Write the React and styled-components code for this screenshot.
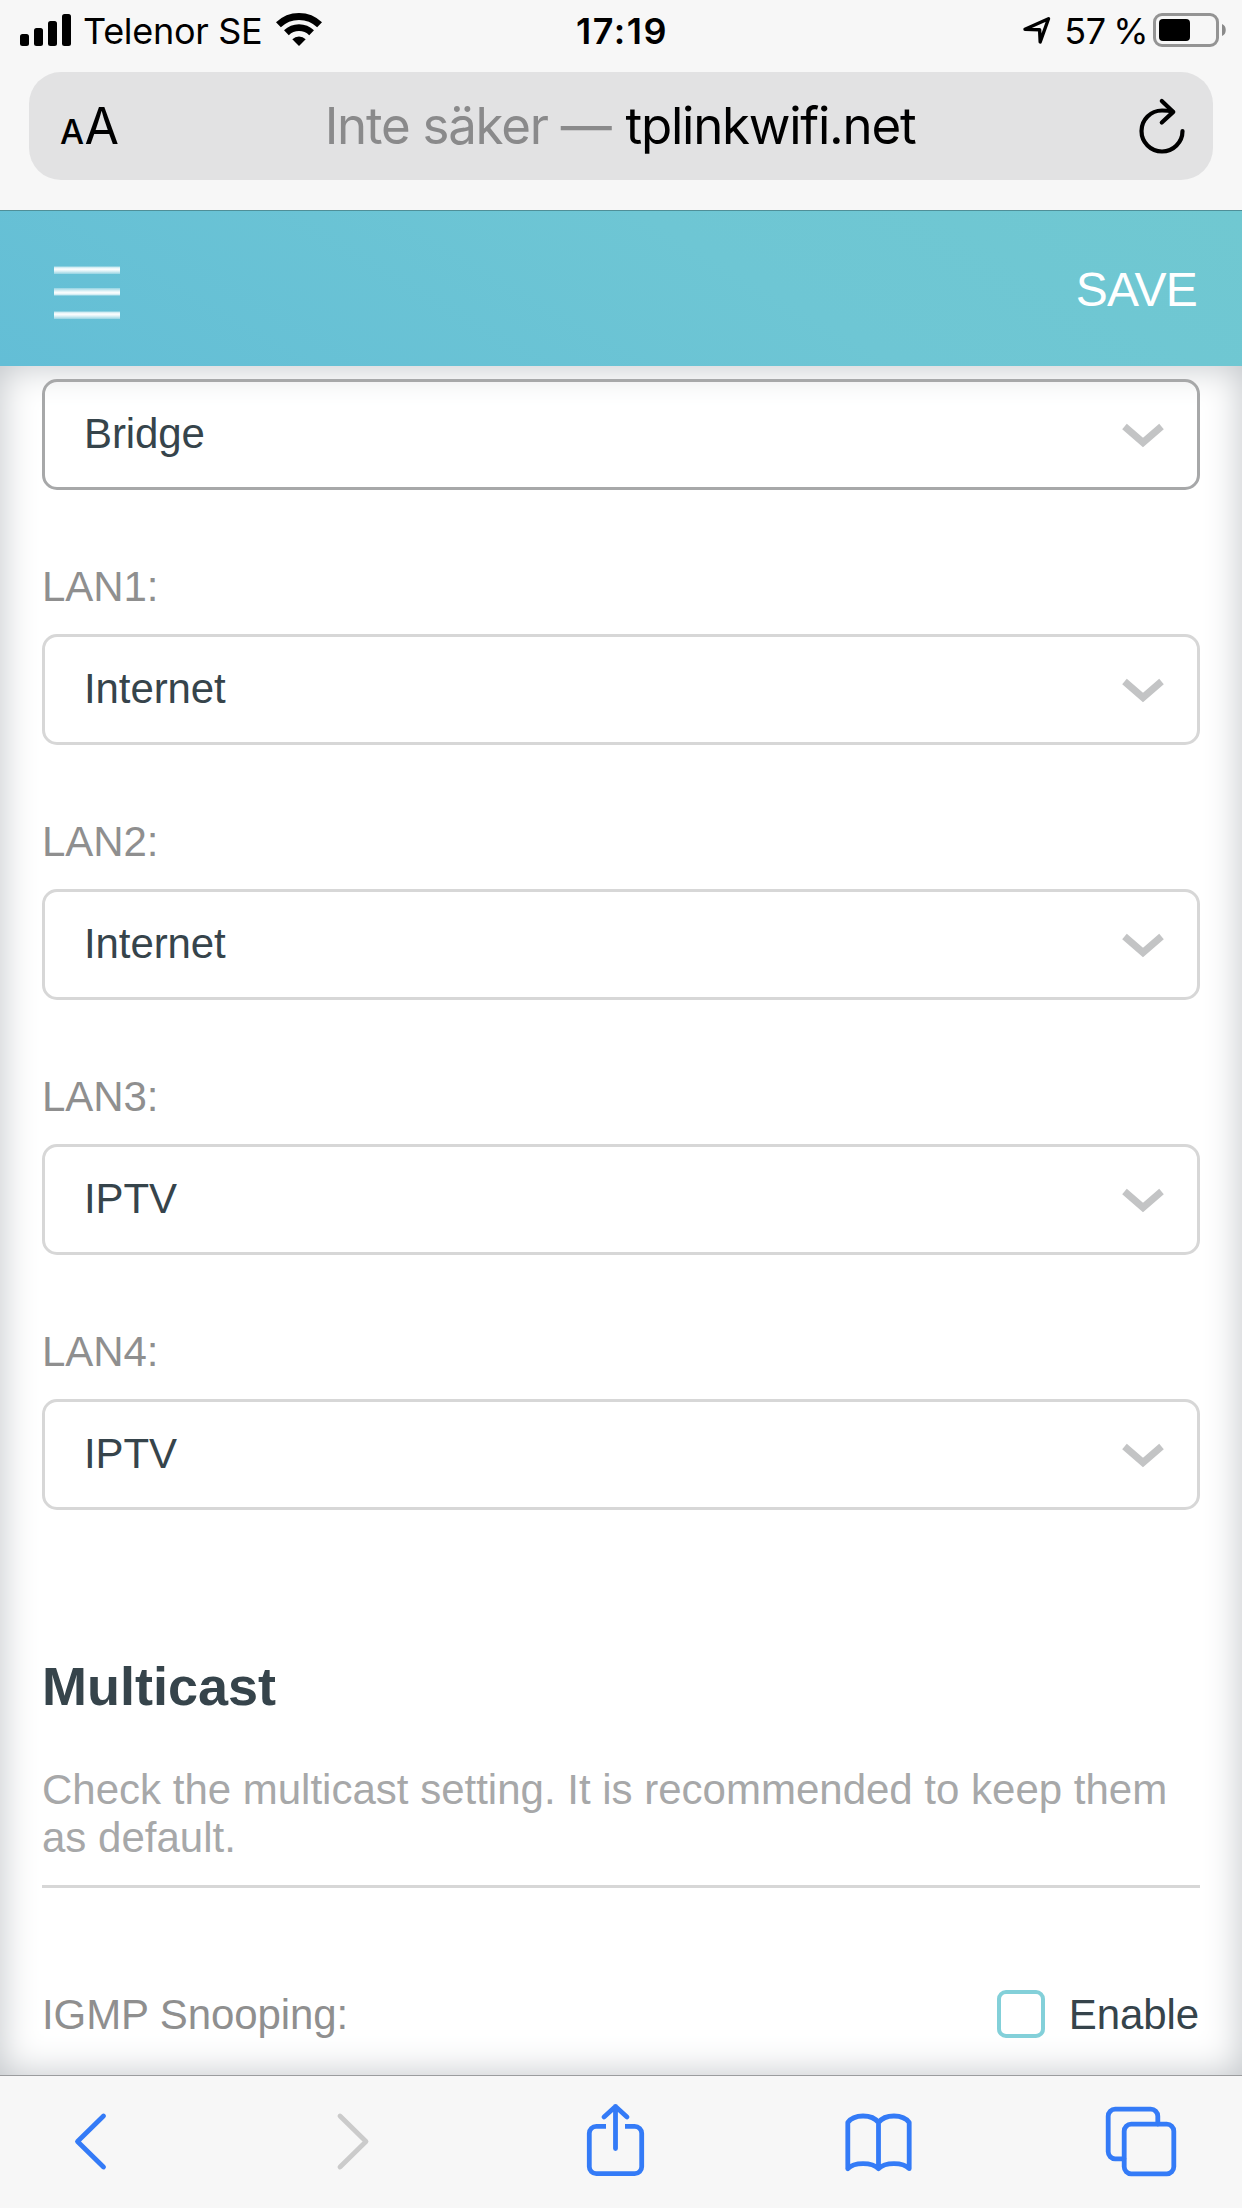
import React, { useState } from "react";
import styled, { createGlobalStyle } from "styled-components";

const GlobalStyle = createGlobalStyle`
  * { box-sizing: border-box; }
  body { margin: 0; background: #f7f7f7; }
`;

const Screen = styled.div`
  display: flex;
  flex-direction: column;
  width: 1242px;
  height: 2208px;
  overflow: hidden;
  font-family: "Liberation Sans", Arial, sans-serif;
  font-size: 42px;
  line-height: 48px;
`;

const BrowserTop = styled.div`
  height: 211px;
  background: #f7f7f7;
  border-bottom: 1px solid #4f8f98;
  font-family: Inter, sans-serif;
  color: #000;
`;

const StatusBar = styled.div`
  display: grid;
  grid-template-columns: 1fr auto 1fr;
  height: 62px;
  padding: 0 16px 0 20px;
  font-size: 36px;
  line-height: 62px;
`;

const StatusGroup = styled.div`
  display: flex;
  justify-content: ${(props) => props.$align || "flex-start"};
`;

const Carrier = styled.span`
  width: 193px;
  margin-left: 11px;
  letter-spacing: -0.3px;
  white-space: nowrap;
`;

const Clock = styled.span`
  padding-right: 2px;
  font-weight: 600;
  letter-spacing: 1.5px;
`;

const Percent = styled.span`
  margin: 0 5px 0 12px;
  letter-spacing: -0.5px;
  word-spacing: -2px;
  white-space: nowrap;
`;

const AddressBar = styled.div`
  display: grid;
  grid-template-columns: 100px 1fr 100px;
  height: 108px;
  margin: 10px 29px 0;
  border-radius: 32px;
  background: #e2e2e3;
  line-height: 108px;
`;

const TextSize = styled.div`
  padding-left: 31px;
  font-size: 50px;
  letter-spacing: -0.5px;
  white-space: nowrap;
  small {
    margin-right: 1px;
    font-size: 34px;
    font-weight: 500;
  }
`;

const Url = styled.div`
  padding-right: 2px;
  font-size: 51px;
  letter-spacing: -1.25px;
  text-align: center;
  white-space: nowrap;
`;

const Muted = styled.span`
  margin-right: 2px;
  color: #8a8a8b;
`;

const Header = styled.header`
  display: flex;
  align-items: center;
  justify-content: space-between;
  height: 155px;
  padding: 0 45px 0 54px;
  background: linear-gradient(30deg, #63bed6 0%, #6ec6d4 60%, #70c8d1 100%);
`;

const Save = styled.button`
  padding: 2px 0 0;
  border: 0;
  background: none;
  color: #fff;
  font: 48px/56px "Liberation Sans", Arial, sans-serif;
  letter-spacing: -0.8px;
`;

const Content = styled.main`
  height: 1709px;
  padding: 13px 42px 0;
  background: #fff;
  box-shadow: inset 0 0 37px #bfc3c7;
`;

const Label = styled.div`
  color: #8f8f8f;
  letter-spacing: -0.1px;
  line-height: 50px;
`;

const Field = styled.div`
  padding-top: 72px;
  ${Label} { margin-bottom: 22px; }
`;

const SelectBox = styled.div`
  display: flex;
  align-items: center;
  justify-content: space-between;
  height: 111px;
  padding: 0 33px 2px 39px;
  border: 3px solid ${(props) => (props.$active ? "#a7a8a9" : "#d7d7d7")};
  border-radius: 15px;
  color: #36444b;
  letter-spacing: -0.1px;
`;

const Title = styled.h2`
  margin: 145px 0 0;
  color: #36444b;
  font-size: 54px;
  line-height: 62px;
`;

const Hint = styled.p`
  margin: 49px 0 0;
  padding-bottom: 23px;
  border-bottom: 3px solid #d7d7d7;
  color: #a7a8a9;
`;

const OptionRow = styled.div`
  display: flex;
  align-items: center;
  justify-content: space-between;
  margin-top: 102px;
`;

const CheckLabel = styled.label`
  display: flex;
  align-items: center;
  gap: 24px;
  padding-right: 1px;
  color: #36444b;
  letter-spacing: -0.1px;
  line-height: 50px;
`;

const CheckBox = styled.span`
  width: 48px;
  height: 48px;
  margin-bottom: 2px;
  border: 4px solid #83d0d9;
  border-radius: 9px;
  background: ${(props) => (props.$checked ? "#83d0d9" : "transparent")};
`;

const BottomBar = styled.nav`
  display: flex;
  justify-content: space-between;
  height: 133px;
  padding: 24px 65px 0 55px;
  border-top: 1px solid #9b9c9e;
  background: #f7f7f7;
`;

const NavIcon = styled.svg`
  width: 72px;
  height: 80px;
  fill: none;
  stroke: ${(props) => (props.$disabled ? "#cbcbcb" : "#347bf7")};
  stroke-width: 4.8;
  stroke-linecap: round;
  stroke-linejoin: round;
`;

const Signal = () => (
  <svg width="52" height="62" viewBox="0 0 52 62">
    <rect x="0" y="34" width="9" height="12" rx="2.5" />
    <rect x="14" y="28" width="9" height="18" rx="2.5" />
    <rect x="28" y="21" width="9" height="25" rx="2.5" />
    <rect x="42" y="14" width="9" height="32" rx="2.5" />
  </svg>
);

const Wifi = () => (
  <svg width="46" height="62" viewBox="0 0 46 62">
    <path d="M2.4 24.8a29.5 29.5 0 0 1 41.2 0" fill="none" stroke="#000" strokeWidth="7" />
    <path d="M10.4 32.8a18 18 0 0 1 25.2 0" fill="none" stroke="#000" strokeWidth="6.8" />
    <path d="M16.3 39.2a9.8 9.8 0 0 1 13.4 0L23 46z" />
  </svg>
);

const Location = () => (
  <svg width="30" height="62" viewBox="0 0 30 62">
    <path d="M3 29.2 26.5 18.8 18.2 42 17.6 29.7z" fill="none" stroke="#000" strokeWidth="3.4" strokeLinejoin="round" />
  </svg>
);

const Battery = () => (
  <svg width="73" height="62" viewBox="0 0 73 62">
    <rect x="1.5" y="14.5" width="63" height="31" rx="7.5" fill="none" stroke="#949494" strokeWidth="3" />
    <rect x="6" y="19" width="31" height="22" rx="4" />
    <path d="M69 24c5 1.5 5 10.5 0 12z" fill="#8a8a8a" />
  </svg>
);

const Reload = () => (
  <svg width="100" height="108" viewBox="0 0 100 108" fill="none" stroke="#000" strokeWidth="4.2" strokeLinecap="round" strokeLinejoin="round">
    <path d="M59.500 39.500C56 38.600 52.500 38.500 49 38.500a20.500 20.500 0 1 0 20.500 20.500" />
    <path d="M48.800 29 60.300 39.900 48.800 50.500" />
  </svg>
);

const Menu = () => (
  <svg width="66" height="60" viewBox="0 0 66 60">
    <defs>
      <linearGradient id="down" x1="0" y1="0" x2="0" y2="1">
        <stop offset="0" stopColor="#fff" stopOpacity="0.55" />
        <stop offset="0.35" stopColor="#fff" />
        <stop offset="0.6" stopColor="#fff" stopOpacity="0.8" />
        <stop offset="1" stopColor="#fff" stopOpacity="0.3" />
      </linearGradient>
      <linearGradient id="up" x1="0" y1="1" x2="0" y2="0">
        <stop offset="0" stopColor="#fff" stopOpacity="0.55" />
        <stop offset="0.35" stopColor="#fff" />
        <stop offset="0.6" stopColor="#fff" stopOpacity="0.8" />
        <stop offset="1" stopColor="#fff" stopOpacity="0.3" />
      </linearGradient>
    </defs>
    <rect y="7.5" width="66" height="7.5" fill="url(#down)" />
    <rect y="29" width="66" height="7.5" fill="url(#up)" />
    <rect y="52.5" width="66" height="7.5" fill="url(#down)" />
  </svg>
);

const Chevron = () => (
  <svg width="42" height="30" viewBox="0 0 42 30">
    <path d="M2.5 7.5 21 23.5 39.5 7.5" fill="none" stroke="#c3c4c5" strokeWidth="7" />
  </svg>
);

const Select = ({ value, active }) => (
  <SelectBox $active={active}>
    {value}
    <Chevron />
  </SelectBox>
);

const ports = [
  { name: "LAN1:", mode: "Internet" },
  { name: "LAN2:", mode: "Internet" },
  { name: "LAN3:", mode: "IPTV" },
  { name: "LAN4:", mode: "IPTV" },
];

const App = () => {
  const [snooping, setSnooping] = useState(false);

  return (
    <Screen>
      <GlobalStyle />
      <BrowserTop>
        <StatusBar>
          <StatusGroup>
            <Signal />
            <Carrier>Telenor SE</Carrier>
            <Wifi />
          </StatusGroup>
          <Clock>17:19</Clock>
          <StatusGroup $align="flex-end">
            <Location />
            <Percent>57 %</Percent>
            <Battery />
          </StatusGroup>
        </StatusBar>
        <AddressBar>
          <TextSize><small>A</small>A</TextSize>
          <Url><Muted>Inte säker — </Muted>tplinkwifi.net</Url>
          <Reload />
        </AddressBar>
      </BrowserTop>

      <Header>
        <Menu />
        <Save>SAVE</Save>
      </Header>

      <Content>
        <Select value="Bridge" active />
        {ports.map((port) => (
          <Field key={port.name}>
            <Label>{port.name}</Label>
            <Select value={port.mode} />
          </Field>
        ))}
        <Title>Multicast</Title>
        <Hint>Check the multicast setting. It is recommended to keep them as default.</Hint>
        <OptionRow>
          <Label>IGMP Snooping:</Label>
          <CheckLabel onClick={() => setSnooping(!snooping)}>
            <CheckBox $checked={snooping} />
            Enable
          </CheckLabel>
        </OptionRow>
      </Content>

      <BottomBar>
        <NavIcon viewBox="0 0 72 80">
          <path d="M48.5 16 22.5 41.5 48.5 67" />
        </NavIcon>
        <NavIcon viewBox="0 0 72 80" $disabled>
          <path d="M22 16 48 41.5 22 67" />
        </NavIcon>
        <NavIcon viewBox="0 0 72 80">
          <path d="M26 26.3H16.3a7 7 0 0 0-7 7V66.7a7 7 0 0 0 7 7H54.7a7 7 0 0 0 7-7V33.3a7 7 0 0 0-7-7H45" strokeLinecap="butt" />
          <path d="M35.5 48.5V6.5M24 17 35.5 6.5 47 17" />
        </NavIcon>
        <NavIcon viewBox="0 0 72 80">
          <path d="M4.8 68.7V22.5C11 13.8 29 13.8 35.5 22.5 42 13.8 60 13.8 66.2 22.5V68.7C60 61.8 42 61.8 35.5 68.7 29 61.8 11 61.8 4.8 68.7M35.5 22.5V68.7" />
        </NavIcon>
        <NavIcon viewBox="0 0 72 80">
          <path d="M19 58.8H10.2a7 7 0 0 1-7-7V16.2a7 7 0 0 1 7-7H45.8a7 7 0 0 1 7 7V24" />
          <rect x="19.2" y="24.2" width="49.6" height="49.6" rx="7" />
        </NavIcon>
      </BottomBar>
    </Screen>
  );
};

export default App;
